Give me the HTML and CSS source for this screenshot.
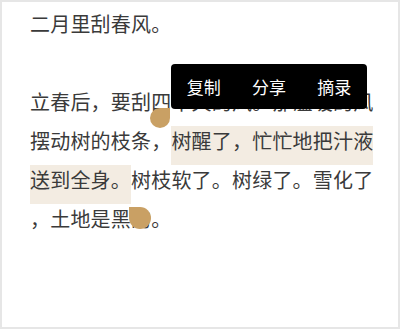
FILE: index.html
```html
<!DOCTYPE html>
<html lang="zh-CN">
<head>
<meta charset="utf-8">
<title>二月里刮春风</title>
<link rel="stylesheet" href="styles.css">
</head>
<body>
<div class="frame">
  <article class="reader">
    <p class="para">二月里刮春风。</p>
    <p class="para">立春后，要刮四十天的风。那温暖的风摆动树的枝条，<span class="sel">树醒了，忙忙地把汁液送到全身。</span>树枝软了。树绿了。雪化了，土地是黑的。</p>
  </article>
  <div class="menu">
    <span class="menu-item">复制</span>
    <span class="menu-item">分享</span>
    <span class="menu-item">摘录</span>
  </div>
  <span class="handle handle-start"></span>
  <span class="handle handle-end"></span>
</div>
</body>
</html>
```

FILE: styles.css
```css
html, body {
  margin: 0;
  padding: 0;
  background: #ffffff;
}

.frame {
  position: relative;
  width: 400px;
  height: 329px;
  box-sizing: border-box;
  border: 2px solid #e6e6e6;
  background: #ffffff;
  overflow: hidden;
}

.reader {
  padding: 2px 18px 0 28px;
  font-family: "Noto Sans CJK SC", "Noto Sans", sans-serif;
  font-size: 20px;
  letter-spacing: 0.2px;
  line-height: 39px;
  color: #3a3a3a;
  line-break: anywhere;
  word-break: break-all;
}

.para {
  margin: 0 0 39px 0;
}

.sel {
  background: #f3ece2;
  padding: 0 0 10px 0;
}

.menu {
  position: absolute;
  left: 169px;
  top: 62px;
  width: 196px;
  height: 45px;
  background: #000000;
  border-radius: 4px;
  display: grid;
  grid-template-columns: repeat(3, 1fr);
  align-items: center;
  justify-items: center;
  font-family: "Noto Sans CJK SC", "Noto Sans", sans-serif;
  font-size: 17px;
  color: #ffffff;
}

.menu-item {
  line-height: 1;
}

.handle {
  position: absolute;
  background: #c9a064;
}

.handle-start {
  left: 148px;
  top: 106px;
  width: 20px;
  height: 20px;
  border-radius: 50% 0 50% 50%;
}

.handle-end {
  left: 127px;
  top: 205px;
  width: 22px;
  height: 22px;
  border-radius: 0 50% 50% 50%;
}
```
